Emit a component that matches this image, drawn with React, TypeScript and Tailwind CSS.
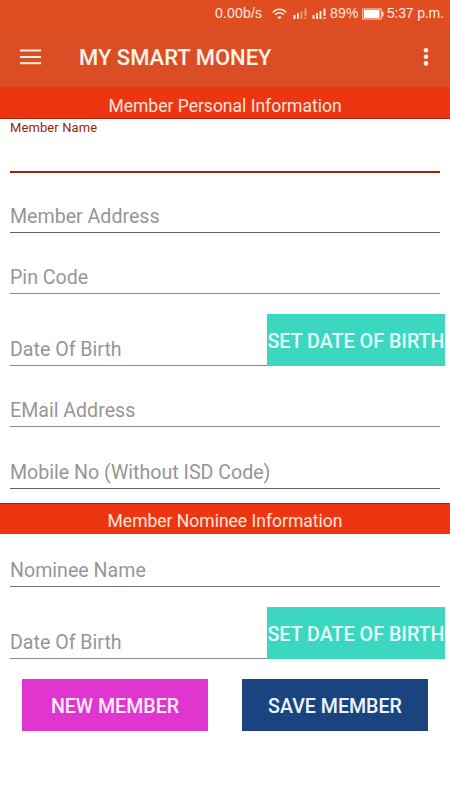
import { useState } from "react";

interface FieldProps {
  label: string;
  className: string;
}

const Field = ({ label, className }: FieldProps) => {
  const [value, setValue] = useState("");

  return (
    <div className={`mx-[10px] flex items-end border-b ${className}`}>
      <input
        type="text"
        value={value}
        onChange={(e) => setValue(e.target.value)}
        placeholder={label}
        className="mb-[2px] h-[26px] w-full min-w-0 bg-transparent text-[19.6px] text-[#333] placeholder:text-[#969696] focus:outline-none"
      />
    </div>
  );
};

/** Date row: the button covers the right end of the underline. */
const DateField = ({ className }: { className: string }) => (
  <div className={`flex items-stretch pr-[5px] ${className}`}>
    <div className="min-w-0 flex-1">
      <Field label="Date Of Birth" className="mr-0 h-full border-[#8c8c8c]" />
    </div>
    <button className="h-[52px] w-[178px] self-end whitespace-nowrap bg-[#3bd7c0] pt-[3px] text-[19.7px] font-medium text-[#e6fffb]">
      SET DATE OF BIRTH
    </button>
  </div>
);

const SignalIcon = ({ weak = false }: { weak?: boolean }) => (
  <svg className="h-[12px] w-[15px]" viewBox="0 0 15 12" fill="#ffe9df">
    <rect x="0.5" y="7" width="2" height="4" />
    <rect x="4" y="5" width="2" height="6" />
    <rect x="7.5" y="3" width="2" height="8" opacity={weak ? 0.45 : 1} />
    <rect x="11.5" y="0.5" width="2" height="7.5" opacity={weak ? 0.5 : 1} />
    <rect x="11.5" y="9.2" width="2" height="1.8" opacity={weak ? 0.5 : 1} />
  </svg>
);

const StatusBar = () => (
  <div className="flex h-[27px] items-center bg-[#df4d20] pl-[215px] font-['Liberation_Sans',sans-serif] text-[14px] text-[#ffeae0]">
    <span className="w-[57px] tracking-[0.2px]">0.00b/s</span>
    <svg className="h-[12px] w-[15px]" viewBox="0 0 15 12" fill="none" stroke="#ffe9df" strokeWidth="1.5">
      <path d="M0.7 4.4C4.6 0.2 10.4 0.2 14.3 4.4" />
      <path d="M3.1 6.8C5.6 4.1 9.4 4.1 11.9 6.8" />
      <path d="M5.3 9.1C6.6 7.8 8.4 7.8 9.7 9.1L7.5 11.3Z" fill="#ffe9df" stroke="none" />
    </svg>
    <div className="ml-[6px] flex gap-[4px]">
      <SignalIcon weak />
      <SignalIcon />
    </div>
    <span className="ml-[3px] w-[32px] tracking-[0.2px]">89%</span>
    <svg className="h-[12px] w-[22px]" viewBox="0 0 22 12">
      <rect x="0.7" y="1" width="18.6" height="10" fill="none" stroke="#ffc4ad" strokeWidth="1.2" />
      <rect x="2" y="2" width="15.5" height="8" fill="#fff" />
      <rect x="20" y="3.5" width="1.5" height="5" fill="#ffdfd2" />
    </svg>
    <span className="ml-[3px] whitespace-nowrap tracking-[-0.2px]">5:37 p.m.</span>
  </div>
);

const AppBar = () => (
  <header className="flex h-[60px] items-center bg-[#db4e25] pl-[20px] pr-[21px]">
    <button aria-label="Menu">
      <svg className="h-[16px] w-[21px]" viewBox="0 0 21 16" fill="#ffeee2">
        <rect y="0.5" width="21" height="2" />
        <rect y="7" width="21" height="2" />
        <rect y="13.2" width="21" height="2" />
      </svg>
    </button>
    <h1 className="ml-[38px] flex-1 pt-px text-[22px] font-medium text-[#fff3ea]">MY SMART MONEY</h1>
    <button aria-label="More options">
      <svg className="h-[20px] w-[6px]" viewBox="0 0 6 20" fill="#fff3ea">
        <circle cx="3" cy="3.2" r="2.3" />
        <circle cx="3" cy="9.8" r="2.3" />
        <circle cx="3" cy="16.4" r="2.3" />
      </svg>
    </button>
  </header>
);

export default function App() {
  return (
    <div className="h-[800px] w-[450px] overflow-hidden bg-white font-['Roboto',sans-serif]">
      <StatusBar />
      <AppBar />

      <h2 className="h-[32px] border-b border-[#b52408] bg-[#ee3511] pt-[4px] text-center text-[17.5px] leading-[30px] text-[#ffe6dc]">
        Member Personal Information
      </h2>
      <div className="mx-[10px] h-[54px] border-b-2 border-[#922808]">
        <label className="block text-[13px] leading-[17px] tracking-[0.1px] text-[#922808]">Member Name</label>
        <input type="text" aria-label="Member Name" className="h-[30px] w-full text-[20px] focus:outline-none" />
      </div>
      <Field label="Member Address" className="h-[60px] border-[#626262]" />
      <Field label="Pin Code" className="h-[61px] border-[#8c8c8c]" />
      <DateField className="h-[72px]" />
      <Field label="EMail Address" className="h-[61px] border-[#8c8c8c]" />
      <Field label="Mobile No (Without ISD Code)" className="h-[62px] border-[#626262]" />

      <h2 className="mt-[14px] h-[31px] border-t border-[#b52408] bg-[#ee3511] pt-[3px] text-center text-[17.5px] leading-[28px] text-[#ffe6dc]">
        Member Nominee Information
      </h2>
      <Field label="Nominee Name" className="h-[53px] border-[#707070]" />
      <DateField className="h-[72px]" />

      <div className="mt-[20px] flex gap-[34px] px-[22px]">
        <button className="h-[52px] w-[186px] bg-[#e035cf] pt-[3px] text-[19.6px] font-medium text-[#ffecfc]">
          NEW MEMBER
        </button>
        <button className="h-[52px] w-[186px] bg-[#1a4480] pt-[3px] text-[19.6px] font-medium text-[#eef5ff]">
          SAVE MEMBER
        </button>
      </div>
    </div>
  );
}
